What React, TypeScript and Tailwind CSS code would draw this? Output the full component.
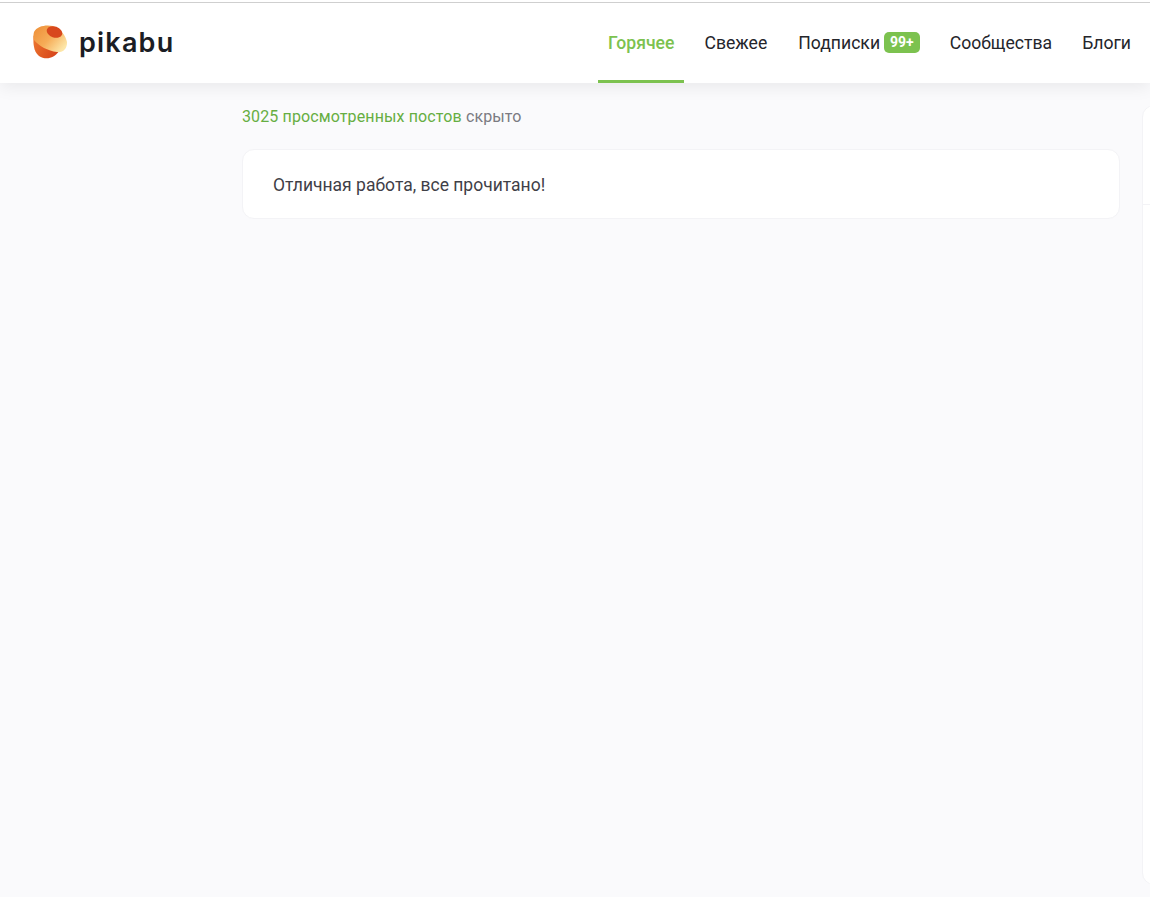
const NAV = ["Свежее", "Подписки", "Сообщества", "Блоги"];

function Logo() {
  return (
    <svg width="36" height="34" viewBox="0 0 36 34" className="shrink-0">
      <defs>
        <linearGradient id="cap" x1="0" y1="0" x2="1" y2="0.7">
          <stop offset="0" stopColor="#ee8d36" />
          <stop offset="0.55" stopColor="#f6ad58" />
          <stop offset="1" stopColor="#fde6a8" />
        </linearGradient>
        <linearGradient id="base" x1="0" y1="0" x2="1" y2="0.5">
          <stop offset="0" stopColor="#ee7a30" />
          <stop offset="1" stopColor="#d8481c" />
        </linearGradient>
      </defs>
      <path d="M0.5 11 C0 20 1 27 6 31 C12 35 21 34 26 26 L20 14 L3 8 Z" fill="url(#base)" />
      <path d="M1 7 C4 1 13 -0.5 20 1 C27 3 33 11 34 17 C34.5 23 30 28 24 27 C15 26 6 21 1 15 C0 12 0.5 9 1 7 Z" fill="url(#cap)" />
      <ellipse cx="21.5" cy="7" rx="8" ry="5.5" transform="rotate(20 21.5 7)" fill="#d8481d" />
    </svg>
  );
}

export default function App() {
  return (
    <div className="h-[897px] w-full overflow-hidden bg-[#fafafc] font-['Roboto',sans-serif]">
      <header className="relative z-10 flex h-[83px] items-stretch justify-between bg-white pl-[33px] pr-[9px] shadow-[0_4px_16px_rgba(0,0,0,0.07)]">
        <div className="absolute inset-x-0 top-[2px] h-[1px] bg-[#cfcfcf]" />
        <div className="flex items-center gap-[10px] pt-[1px]">
          <Logo />
          <span className="pt-[1px] font-['Inter',sans-serif] text-[27px] font-semibold leading-none tracking-[1.2px] text-[#1b1d24]">pikabu</span>
        </div>
        <nav className="flex items-stretch gap-[10px] text-[17.6px] font-normal text-[#24252b]">
          <a className="flex items-center border-b-[3px] border-[#7cc24f] px-[10px] pt-[6px] font-medium text-[#7cc24f]">Горячее</a>
          {NAV.map((item) => (
            <a
              key={item}
              className={item === "Свежее" ? "flex items-center pb-[3px] pl-[10px] pr-[11px] pt-[6px]" : "flex items-center gap-[4px] px-[10px] pb-[3px] pt-[6px]"}
            >
              {item}
              {item === "Подписки" && (
                <span className="mb-[1px] rounded-[5px] bg-[#7cc24f] px-[6px] text-[14px] font-bold leading-[21px] text-white">99+</span>
              )}
            </a>
          ))}
        </nav>
      </header>

      <main className="flex items-start gap-[22px] pl-[242px]">
        <div className="w-[878px] shrink-0">
          <p className="mb-[23px] mt-[24px] text-[16px] leading-[19px] tracking-[0.12px] text-[#7b7b82]">
            <span className="text-[#66ae42]">3025 просмотренных постов</span> скрыто
          </p>
          <div className="rounded-[12px] border border-[#f3f3f6] bg-white px-[30px] pb-[23px] pt-[25px] text-[17.5px] leading-[20px] text-[#3f4047]">
            Отличная работа, все прочитано!
          </div>
        </div>
        <aside className="mt-[22px] h-[780px] w-[300px] shrink-0 rounded-[12px] border border-[#f3f3f6] bg-white">
          <div className="h-[99px] border-b border-[#f3f3f6]" />
        </aside>
      </main>
    </div>
  );
}
